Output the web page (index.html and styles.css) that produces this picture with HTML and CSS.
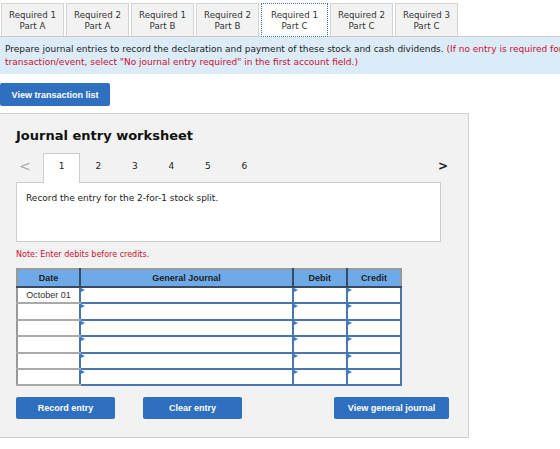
FILE: index.html
```html
<!DOCTYPE html>
<html lang="en">
<head>
  <meta charset="UTF-8">
  <title>Journal entry worksheet</title>
  <link rel="stylesheet" href="styles.css">
</head>
<body>
  <div class="req-tabs">
    <div class="req-tab">Required 1<br>Part A</div>
    <div class="req-tab">Required 2<br>Part A</div>
    <div class="req-tab">Required 1<br>Part B</div>
    <div class="req-tab">Required 2<br>Part B</div>
    <div class="req-tab active">Required 1<br>Part C</div>
    <div class="req-tab">Required 2<br>Part C</div>
    <div class="req-tab">Required 3<br>Part C</div>
  </div>

  <div class="instructions">
    Prepare journal entries to record the declaration and payment of these stock and cash dividends.
    <span class="red">(If no entry is required for a transaction/event, select "No journal entry required" in the first account field.)</span>
  </div>

  <button class="btn view-list">View transaction list</button>

  <div class="worksheet">
    <h2>Journal entry worksheet</h2>

    <div class="pager">
      <span class="arrow prev">&lt;</span>
      <span class="page current">1</span>
      <span class="page">2</span>
      <span class="page">3</span>
      <span class="page">4</span>
      <span class="page">5</span>
      <span class="page">6</span>
      <span class="arrow next">&gt;</span>
    </div>

    <div class="entry-box">Record the entry for the 2-for-1 stock split.</div>

    <p class="note">Note: Enter debits before credits.</p>

    <table class="journal">
      <thead>
        <tr>
          <th class="c-date">Date</th>
          <th class="c-acct">General Journal</th>
          <th class="c-amt">Debit</th>
          <th class="c-amt">Credit</th>
        </tr>
      </thead>
      <tbody>
        <tr><td class="date">October 01</td><td class="inp"></td><td class="inp"></td><td class="inp"></td></tr>
        <tr><td class="date"></td><td class="inp"></td><td class="inp"></td><td class="inp"></td></tr>
        <tr><td class="date"></td><td class="inp"></td><td class="inp"></td><td class="inp"></td></tr>
        <tr><td class="date"></td><td class="inp"></td><td class="inp"></td><td class="inp"></td></tr>
        <tr><td class="date"></td><td class="inp"></td><td class="inp"></td><td class="inp"></td></tr>
        <tr><td class="date"></td><td class="inp"></td><td class="inp"></td><td class="inp"></td></tr>
      </tbody>
    </table>

    <div class="actions">
      <button class="btn">Record entry</button>
      <button class="btn clear">Clear entry</button>
      <button class="btn general">View general journal</button>
    </div>
  </div>
</body>
</html>
```

FILE: styles.css
```css
body {
  margin: 0;
  background: #fff;
  color: #222;
  font-family: 'DejaVu Sans', Verdana, sans-serif;
  font-size: 9px;
  width: 560px;
  overflow: hidden;
}
.req-tabs {
  display: flex;
  gap: 2px;
  padding-top: 3px;
  padding-left: 1px;
  border-bottom: 1px solid #ccc;
  height: 33px;
}
.req-tab {
  width: 63px;
  height: 33px;
  box-sizing: border-box;
  background: #f2f2f2;
  border: 1px solid #d4d4d4;
  border-bottom: none;
  text-align: center;
  font-size: 8.7px;
  line-height: 11px;
  padding-top: 6px;
  color: #333;
}
.req-tab.active {
  width: 67px;
  height: 34px;
  background: #fff;
  border: 1px dotted #3b6fb6;
  position: relative;
  z-index: 1;
}
.instructions {
  background: #dcebf8;
  padding: 6px 5px 6px;
  line-height: 13px;
  width: 600px;
  height: 25px;
  overflow: hidden;
}
.red {
  color: #c8102e;
}
.btn {
  background: #2f6fbf;
  color: #fff;
  border: none;
  border-radius: 2px;
  font-family: 'Liberation Sans', Arial, sans-serif;
  font-weight: bold;
  font-size: 9px;
  height: 23px;
  padding: 0 6px;
  white-space: nowrap;
  cursor: pointer;
}
.view-list {
  margin-top: 9px;
  width: 110px;
  display: block;
}
.worksheet {
  margin-top: 7px;
  width: 469px;
  height: 325px;
  box-sizing: border-box;
  background: #f2f2f2;
  border: 1px solid #d0d0d0;
  border-left: none;
  padding: 0 0 0 16px;
}
.worksheet h2 {
  margin: 14px 0 0;
  font-size: 13px;
  font-weight: bold;
  color: #111;
  height: 18px;
}
.pager {
  display: flex;
  align-items: flex-end;
  margin-top: 6px;
  height: 30px;
  position: relative;
}
.arrow {
  font-size: 14px;
  color: #aaa;
  width: 24px;
  padding-left: 3px;
  line-height: 23px;
  margin-bottom: 4px;
}
.arrow.next {
  position: absolute;
  right: 20px;
  bottom: 0;
  width: auto;
  padding: 0;
  color: #222;
  font-weight: bold;
  font-size: 12px;
}
.page {
  width: 36.5px;
  text-align: center;
  line-height: 23px;
  margin-bottom: 4px;
  font-size: 9px;
}
.page.current {
  width: 35px;
  background: #fff;
  border: 1px solid #ccc;
  border-bottom: none;
  height: 29px;
  line-height: 25px;
  margin-bottom: 0;
  position: relative;
  top: 1px;
}
.entry-box {
  width: 425px;
  height: 60px;
  box-sizing: border-box;
  background: #fff;
  border: 1px solid #ccc;
  padding: 10px 9px;
  font-size: 9px;
}
.note {
  margin: 8px 0 0;
  color: #c8102e;
  font-size: 8px;
  height: 18px;
}
.journal {
  border-collapse: collapse;
  width: 386px;
  font-family: 'Liberation Sans', Arial, sans-serif;
  font-size: 9px;
  border: 2px solid #999;
}
.journal th {
  background: #6ea9e8;
  color: #222;
  height: 16px;
  padding: 0;
  border-left: 2px solid #3a4a60;
  border-bottom: 2px solid #3a4a60;
  font-weight: bold;
}
.journal th:first-child {
  border-left: none;
}
.c-date { width: 62px; }
.c-acct { width: 216px; }
.c-amt { width: 53px; }
.journal td {
  height: 14.4px;
  padding: 0;
  background: #fff;
}
.journal td.date {
  text-align: center;
  color: #333;
  border-bottom: 2px solid #aaa;
}
.journal td.inp {
  border: 2px solid #4a76b0;
  position: relative;
}
.journal td.inp::before {
  content: '';
  position: absolute;
  left: 0;
  top: 0;
  border-left: 4px solid #2f7fd8;
  border-top: 2.5px solid transparent;
  border-bottom: 2.5px solid transparent;
}
.actions {
  display: flex;
  margin-top: 11px;
}
.actions .btn {
  width: 99px;
  height: 22px;
}
.actions .clear {
  margin-left: 28px;
}
.actions .general {
  margin-left: 92px;
  width: 115px;
}
```
